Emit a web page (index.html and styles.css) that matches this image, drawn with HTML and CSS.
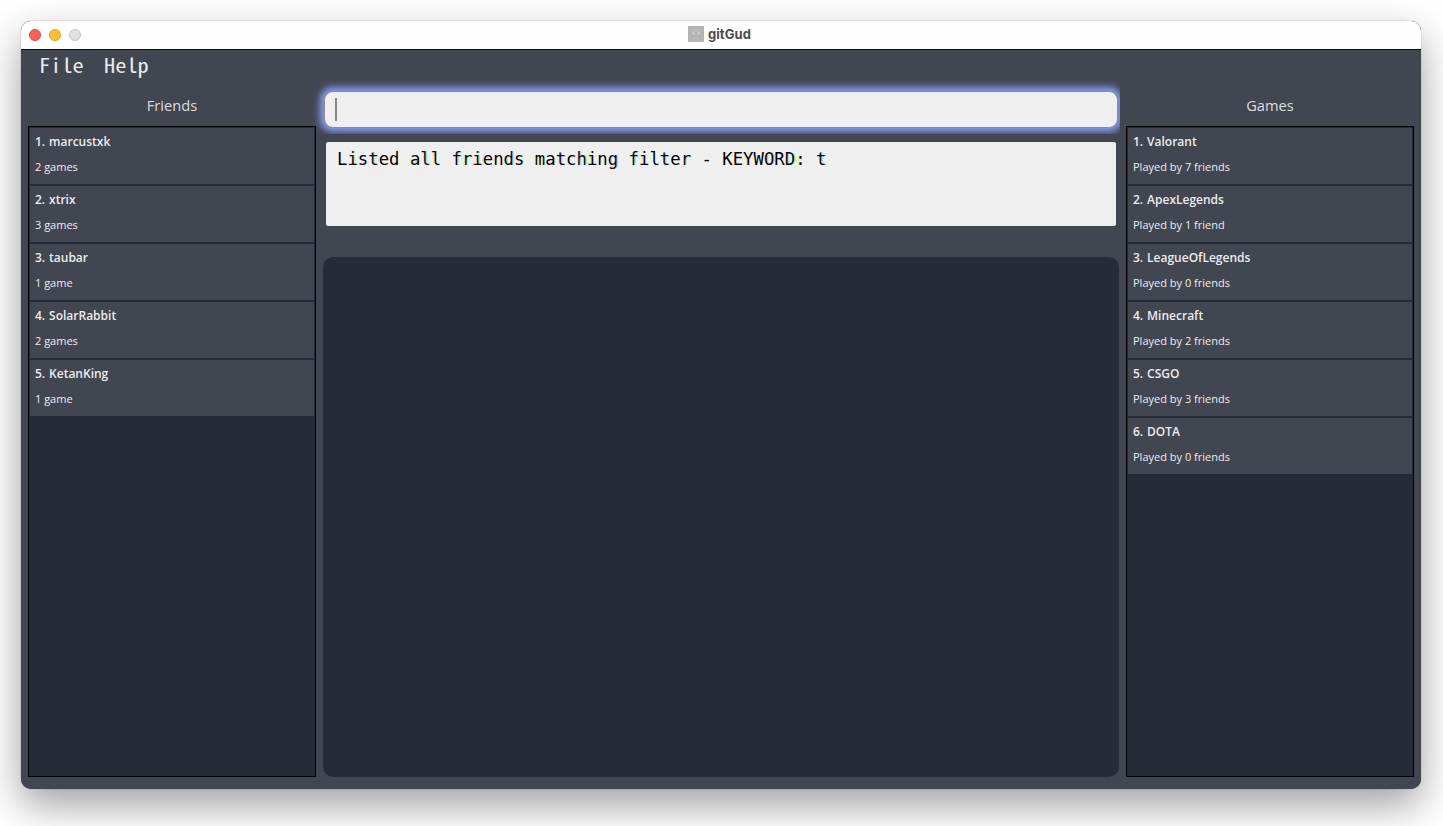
FILE: index.html
```html
<!DOCTYPE html>
<html lang="en">
<head>
<meta charset="utf-8">
<title>gitGud</title>
<link rel="stylesheet" href="styles.css">
</head>
<body>
<main class="window">
  <header class="titlebar">
    <div class="lights"><i class="light close"></i><i class="light minimise"></i><i class="light"></i></div>
    <svg class="app-icon" viewBox="0 0 16 16"><rect width="16" height="16" fill="#b3b4b6"/><path d="M5 8V6.500a3 2.800 0 0 1 6 0V8" fill="none" stroke="#c6c7c9" stroke-width="1"/><path d="M5.300 6.200v2.300M10.700 6.200v2.300" stroke="#e2e3e5" stroke-width="1.200"/><path d="M10.500 8.500 9 9.700H7.800M5 12.500h6" fill="none" stroke="#c6c7ca" stroke-width=".8"/></svg>
    <span class="title">gitGud</span>
  </header>
  <nav class="menu"><span class="menu-item">File</span><span class="menu-item">Help</span></nav>
  <div class="content">
    <section class="side">
      <h2 class="heading">Friends</h2>
      <div class="list">
        <article class="card"><h3 class="name">1. marcustxk</h3><p class="detail">2 games</p></article>
        <article class="card"><h3 class="name">2. xtrix</h3><p class="detail">3 games</p></article>
        <article class="card"><h3 class="name">3. taubar</h3><p class="detail">1 game</p></article>
        <article class="card"><h3 class="name">4. SolarRabbit</h3><p class="detail">2 games</p></article>
        <article class="card"><h3 class="name">5. KetanKing</h3><p class="detail">1 game</p></article>
      </div>
    </section>
    <section class="middle">
      <div class="command"><span class="caret"></span></div>
      <div class="result"><span class="result-text">L<i class="r">i</i><i class="b">s</i><i class="r">t</i>ed <i class="b">a</i><i class="r">l</i><i class="b">l</i> <i class="r">f</i><i class="b">r</i><i class="r">i</i><i class="b">e</i>n<i class="r">d</i><i class="b">s</i> <i class="b">m</i>a<i class="r">t</i>c<i class="r">h</i><i class="b">i</i>n<i class="r">g</i> <i class="r">f</i><i class="b">i</i>l<i class="r">t</i>e<i class="r">r</i> - KE<i class="b">Y</i>W<i class="r">O</i>R<i class="r">D</i><i class="b">:</i> <i class="r">t</i></span></div>
      <div class="display"></div>
    </section>
    <section class="side">
      <h2 class="heading">Games</h2>
      <div class="list">
        <article class="card"><h3 class="name">1. Valorant</h3><p class="detail">Played by 7 friends</p></article>
        <article class="card"><h3 class="name">2. ApexLegends</h3><p class="detail">Played by 1 friend</p></article>
        <article class="card"><h3 class="name">3. LeagueOfLegends</h3><p class="detail">Played by 0 friends</p></article>
        <article class="card"><h3 class="name">4. Minecraft</h3><p class="detail">Played by 2 friends</p></article>
        <article class="card"><h3 class="name">5. CSGO</h3><p class="detail">Played by 3 friends</p></article>
        <article class="card"><h3 class="name">6. DOTA</h3><p class="detail">Played by 0 friends</p></article>
      </div>
    </section>
  </div>
</main>
</body>
</html>
```
FILE: styles.css
```css
* { box-sizing: border-box; margin: 0; padding: 0; }
body { height: 826px; padding: 21px 22px 0 21px; overflow: hidden; background: #fff; font-family: "Open Sans", sans-serif; }
.window { height: 768px; display: flex; flex-direction: column; border-radius: 10px; background: #424650; box-shadow: 0 0 1px rgba(0,0,0,.55), 0 16px 40px rgba(0,0,0,.38); overflow: hidden; }
.titlebar { height: 29px; flex: none; display: grid; grid-template-columns: 1fr auto auto 1fr; align-items: center; column-gap: 4px; padding-right: 3px; background: #fefefe; border-bottom: 1px solid #090b10; }
.lights { display: flex; gap: 8px; padding-left: 8px; }
.light { width: 12px; height: 12px; border-radius: 50%; background: #e1e1e1; border: 1px solid #c6c6c6; }
.close { background: #ff5f57; border-color: #e2463f; }
.minimise { background: #febc2e; border-color: #dfa023; }
.app-icon { width: 16px; height: 16px; margin-top: -2px; }
.title { font: 700 13px/18px Inter, sans-serif; color: #4c4c4c; letter-spacing: .1px; margin-top: -2px; }
.menu { height: 34px; flex: none; display: flex; padding-left: 18px; }
.menu-item { width: 64.500px; font: 20px/30px "Noto Sans Mono CJK SC", "DejaVu Sans Mono", monospace; color: #e9e9eb; transform: scaleX(1.120); transform-origin: left; }
.content { flex: 1; min-height: 0; display: grid; grid-template-columns: 288px 1fr 288px; column-gap: 7px; padding: 0 7px 12px; }
.side { display: flex; flex-direction: column; min-height: 0; }
.heading { height: 42px; text-align: center; font-size: 14.700px; font-weight: 400; line-height: 43px; color: #dcdddf; }
.list { flex: 1; display: flex; flex-direction: column; gap: 2px; padding: 1px; border: 1px solid #000; background: #262c37; }
.card { height: 56px; padding: 3px 5px 0; background: #424650; color: #ececee; }
.name { font-size: 12px; font-weight: 600; line-height: 22px; word-spacing: .8px; }
.detail { font-size: 11px; line-height: 16px; margin-top: 6px; }
.middle { display: flex; flex-direction: column; min-height: 0; padding-top: 7px; }
.command { height: 37px; margin: 0 1px; padding: 6px 11px; border: 1px solid #8b8b8b; border-radius: 9px; background: #efefef; box-shadow: 0 0 7px 4px #879cf6; clip-path: inset(-12px -2px -6px -12px); }
.caret { display: block; width: 2px; height: 23px; background: #858585; margin-left: -1px; }
.result { height: 84px; margin: 14px 3px 31px; padding: 5px 11px; border-radius: 2px; background: #efefef; }
.result-text { display: block; font: 18.400px/24px "DejaVu Sans Mono", monospace; color: #000; white-space: pre; transform: scaleX(.94); transform-origin: left; }
.result-text i { font-style: normal; }
.r { color: #300000; text-shadow: 1px 0 #70f4f4; }
.b { color: #000038; text-shadow: -1px 0 #f0f060; }
.display { flex: 1; border-radius: 10px; background: #262c37; }
```
